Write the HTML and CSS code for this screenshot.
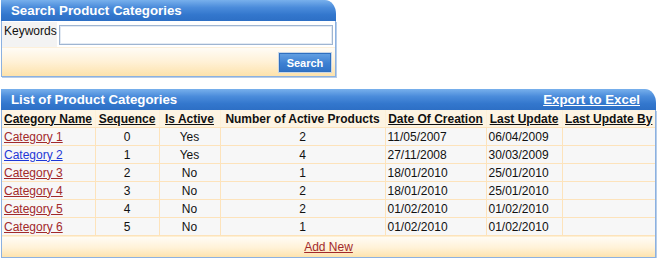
FILE: index.html
```html
<!DOCTYPE html>
<html>
<head>
<meta charset="utf-8">
<link rel="stylesheet" href="styles.css">
</head>
<body>
<div class="panel search">
  <div class="phead"><span class="ptitle">Search Product Categories</span></div>
  <div class="pbody">
    <div class="srow">
      <div class="slabel">Keywords</div>
      <div class="sfield"><input class="sinput" type="text"></div>
    </div>
    <div class="sfoot"><button class="sbtn">Search</button></div>
  </div>
</div>

<div class="panel list">
  <div class="phead"><span class="ptitle">List of Product Categories</span><a class="export" href="#">Export to Excel</a></div>
  <div class="pbody">
    <table class="grid">
      <colgroup>
        <col class="c1"><col class="c2"><col class="c3"><col class="c4"><col class="c5"><col class="c6"><col class="c7">
      </colgroup>
      <thead>
        <tr>
          <th class="left"><a href="#">Category Name</a></th>
          <th><a href="#">Sequence</a></th>
          <th><a href="#">Is Active</a></th>
          <th>Number of Active Products</th>
          <th><a href="#">Date Of Creation</a></th>
          <th><a href="#">Last Update</a></th>
          <th><a href="#">Last Update By</a></th>
        </tr>
      </thead>
      <tbody>
        <tr><td><a class="red" href="#">Category 1</a></td><td class="ctr">0</td><td class="ctr">Yes</td><td class="ctr">2</td><td>11/05/2007</td><td>06/04/2009</td><td></td></tr>
        <tr><td><a class="blue" href="#">Category 2</a></td><td class="ctr">1</td><td class="ctr">Yes</td><td class="ctr">4</td><td>27/11/2008</td><td>30/03/2009</td><td></td></tr>
        <tr><td><a class="red" href="#">Category 3</a></td><td class="ctr">2</td><td class="ctr">No</td><td class="ctr">1</td><td>18/01/2010</td><td>25/01/2010</td><td></td></tr>
        <tr><td><a class="red" href="#">Category 4</a></td><td class="ctr">3</td><td class="ctr">No</td><td class="ctr">2</td><td>18/01/2010</td><td>25/01/2010</td><td></td></tr>
        <tr><td><a class="red" href="#">Category 5</a></td><td class="ctr">4</td><td class="ctr">No</td><td class="ctr">2</td><td>01/02/2010</td><td>01/02/2010</td><td></td></tr>
        <tr><td><a class="red" href="#">Category 6</a></td><td class="ctr">5</td><td class="ctr">No</td><td class="ctr">1</td><td>01/02/2010</td><td>01/02/2010</td><td></td></tr>
      </tbody>
      <tfoot>
        <tr><td class="addnew" colspan="7"><a class="red" href="#">Add New</a></td></tr>
      </tfoot>
    </table>
  </div>
</div>
</body>
</html>
```
FILE: styles.css
```css
body {
  margin: 0;
  background: #fff;
  font-family: "Liberation Sans", Arial, sans-serif;
  font-size: 12px;
  color: #111;
}

.panel {
  margin-left: 1px;
}

.search {
  width: 335px;
}

.list {
  width: 655px;
  margin-top: 12px;
}

.phead {
  box-sizing: border-box;
  height: 21px;
  display: flex;
  align-items: center;
  justify-content: space-between;
  padding: 0 16px 1px 10px;
  background: linear-gradient(#78b0ec 0%, #4b8cdb 35%, #3377cd 70%, #2d6fc5 100%);
  border-top-right-radius: 11px 14px;
  color: #fff;
  font-weight: bold;
  font-size: 13.3px;
}

.export {
  color: #fff;
  text-decoration: underline;
  font-size: 13.3px;
}

.pbody {
  border: 1px solid #8bb1e1;
  border-top: none;
  box-shadow: 1px 1px 0 #b7cde9;
}

.srow {
  display: flex;
  gap: 1px;
  padding-top: 1px;
  height: 25px;
}

.slabel {
  width: 56px;
  background: #f3f3f3;
  padding: 2px 0 0 2px;
  box-sizing: border-box;
}

.sfield {
  flex: 1;
  padding: 3px 2px 0 1px;
}

.sinput {
  box-sizing: border-box;
  display: block;
  width: 274px;
  height: 20px;
  margin: 0;
  border: 1px solid #9fb5d1;
  box-shadow: inset 0 0 0 1px #e3eaf3;
  background: #fff;
  outline: none;
}

.sfoot {
  height: 29px;
  box-sizing: border-box;
  display: flex;
  justify-content: flex-end;
  align-items: flex-start;
  padding: 4px 3px 0 0;
  background: linear-gradient(#fffcf6 0%, #fff1d6 50%, #fde2ab 100%);
  border-top: 1px solid #fdf0da;
}

.sbtn {
  width: 54px;
  height: 21px;
  margin: 0;
  padding: 0;
  border: 1px solid #c8d6e6;
  outline: 1px solid #2f6fbf;
  outline-offset: -2px;
  background: linear-gradient(#66a2e3, #3d80d2 55%, #2f71c6);
  color: #fff;
  font-family: "Liberation Sans", Arial, sans-serif;
  font-weight: bold;
  font-size: 11px;
}

.grid {
  width: 100%;
  border-collapse: collapse;
  table-layout: fixed;
}

.c1 { width: 93px; }
.c2 { width: 64px; }
.c3 { width: 61px; }
.c4 { width: 165px; }
.c5 { width: 101px; }
.c6 { width: 76px; }

.grid th,
.grid td {
  height: 17px;
  padding: 0 2px;
  line-height: 16px;
  white-space: nowrap;
  overflow: hidden;
  border: 1px solid #fde3bb;
  text-align: left;
}

.grid th {
  background: #fdf4e3;
  font-weight: bold;
  text-align: center;
  border-color: #fdf0d8;
  border-bottom-color: #fde3bb;
}

.grid th.left { text-align: left; }

.grid th a {
  color: #111;
  text-decoration: underline;
}

.grid tr > :first-child { border-left: none; }
.grid tr > :last-child { border-right: none; }
.grid thead th { border-top: none; }

.grid td {
  background: #f7f7f7;
}

.grid td.ctr { text-align: center; }

.red { color: #a2292b; }
.blue { color: #1f37d6; }

.grid td.addnew {
  height: 20px;
  padding-top: 1px;
  text-align: center;
  border-bottom: none;
  background: linear-gradient(#fffcf6 0%, #fff1d6 55%, #fde2ab 100%);
}
```
